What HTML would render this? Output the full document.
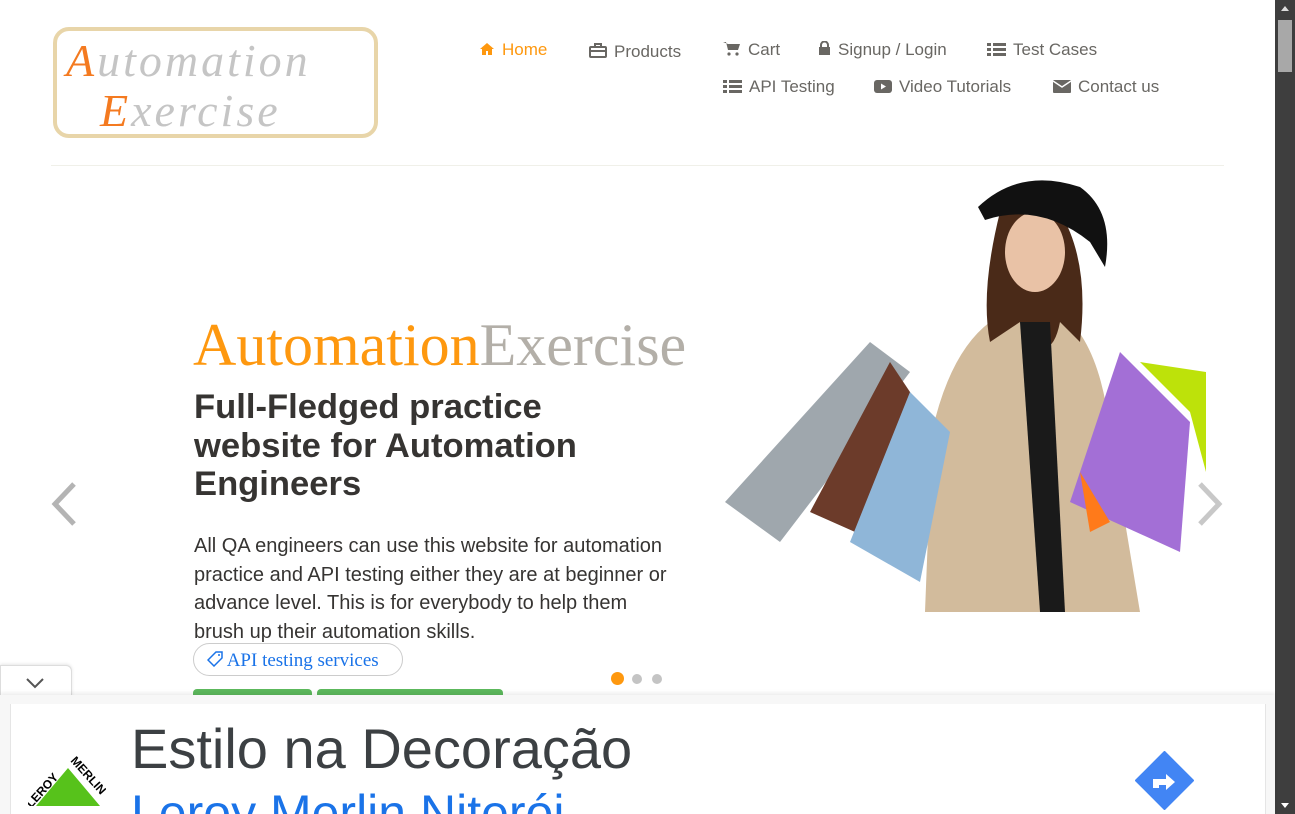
<!DOCTYPE html>
<html style="overflow:hidden;height:814px"><head><meta charset="utf-8"><style>
*{margin:0;padding:0;box-sizing:border-box}
body{width:1295px;height:814px;overflow:hidden;background:#fff;font-family:"Liberation Sans",sans-serif;position:relative}
.sb{position:absolute;right:0;top:0;width:20px;height:814px;background:#3e3e3e}
.thumb{position:absolute;right:3px;top:20px;width:14px;height:52px;background:#a8a8a8}
.nav a{position:absolute;color:#696763;font-size:17px;text-decoration:none;white-space:nowrap}
.nav svg{vertical-align:-1px;margin-right:7px}
.t{position:absolute;white-space:nowrap}
</style></head><body>
<div class="sb"><div class="thumb"></div>
<div style="position:absolute;left:6px;top:6px;border:4px solid transparent;border-bottom:5px solid #ddd;border-top:0"></div>
<div style="position:absolute;left:6px;bottom:6px;border:4px solid transparent;border-top:5px solid #fff;border-bottom:0"></div></div>
<!-- logo -->
<div style="position:absolute;left:53px;top:27px;width:325px;height:111px;border:4px solid #e8d5a9;border-radius:16px;background:#fff"></div>
<div class="t" style="left:66px;top:34px;font:italic 46px 'Liberation Serif',serif;color:#c5c5c5;letter-spacing:3px"><span style="color:#f47a20">A</span>utomation</div>
<div class="t" style="left:100px;top:84px;font:italic 46px 'Liberation Serif',serif;color:#c5c5c5;letter-spacing:3px"><span style="color:#f47a20">E</span>xercise</div>
<div class="nav">
<a style="left:479px;top:40px;color:#FE980F"><svg width="16" height="14" viewBox="0 0 16 14"><path d="M8 1L1 7h2v6h4V9h2v4h4V7h2z" fill="#FE980F"/></svg>Home</a>
<a style="left:589px;top:42px"><svg width="18" height="15" viewBox="0 0 18 15"><rect x="1" y="4" width="16" height="10" rx="1" fill="none" stroke="#696763" stroke-width="2"/><path d="M6 4V1h6v3M1 8h16" stroke="#696763" stroke-width="2" fill="none"/></svg>Products</a>
<a style="left:723px;top:40px"><svg width="18" height="15" viewBox="0 0 18 15"><path d="M0 1h3l2 8h10l2-6H5" fill="#696763"/><circle cx="6" cy="13" r="1.6" fill="#696763"/><circle cx="14" cy="13" r="1.6" fill="#696763"/></svg>Cart</a>
<a style="left:818px;top:40px"><svg width="13" height="15" viewBox="0 0 13 15"><rect x="1" y="6" width="11" height="8" fill="#696763"/><path d="M3 6V4a3.5 3.5 0 017 0v2" stroke="#696763" stroke-width="2" fill="none"/></svg>Signup / Login</a>
<a style="left:987px;top:40px"><svg width="19" height="14" viewBox="0 0 19 14"><path d="M0 1h4v3H0zM6 1h13v3H6zM0 6h4v3H0zM6 6h13v3H6zM0 11h4v3H0zM6 11h13v3H6z" fill="#696763"/></svg>Test Cases</a>
<a style="left:723px;top:77px"><svg width="19" height="14" viewBox="0 0 19 14"><path d="M0 1h4v3H0zM6 1h13v3H6zM0 6h4v3H0zM6 6h13v3H6zM0 11h4v3H0zM6 11h13v3H6z" fill="#696763"/></svg>API Testing</a>
<a style="left:874px;top:77px"><svg width="18" height="14" viewBox="0 0 18 14"><rect x="0" y="1" width="18" height="13" rx="3" fill="#696763"/><path d="M7 4.5v6l5-3z" fill="#fff"/></svg>Video Tutorials</a>
<a style="left:1053px;top:77px"><svg width="18" height="14" viewBox="0 0 18 14"><rect x="0" y="1" width="18" height="13" rx="1" fill="#696763"/><path d="M0 2l9 6 9-6" stroke="#fff" stroke-width="1.5" fill="none"/></svg>Contact us</a>
</div>
<div style="position:absolute;left:51px;top:165px;width:1173px;height:1px;background:#f0f0e9"></div>
<!-- hero -->
<div class="t" style="left:193px;top:311px;font:60px 'Liberation Serif',serif;color:#FE980F">Automation<span style="color:#b3afa8">Exercise</span></div>
<div class="t" style="left:194px;top:388px;font:bold 34.6px 'Liberation Sans';color:#363432;line-height:38.5px">Full-Fledged practice<br>website for Automation<br>Engineers</div>
<div class="t" style="left:194px;top:532px;font:20px 'Liberation Sans';color:#363432;line-height:28.7px">All QA engineers can use this website for automation<br>practice and API testing either they are at beginner or<br>advance level. This is for everybody to help them<br>brush up their automation skills.</div>
<div style="position:absolute;left:193px;top:643px;width:210px;height:33px;border:1px solid #ccc;border-radius:17px"></div>
<div class="t" style="left:207px;top:650px;font:19px 'Liberation Serif',serif;color:#1a73e8"><svg width="16" height="16" viewBox="0 0 16 16" style="vertical-align:-1px"><path d="M9 1h6v6l-8 8-6-6z" fill="none" stroke="#1a73e8" stroke-width="1.5"/><circle cx="12" cy="4" r="1" fill="#1a73e8"/></svg> API testing services</div>
<div style="position:absolute;left:193px;top:689px;width:119px;height:20px;background:#5cb85c;border-radius:4px"></div>
<div style="position:absolute;left:317px;top:689px;width:186px;height:20px;background:#5cb85c;border-radius:4px"></div>
<svg style="position:absolute;left:50px;top:482px" width="28" height="44"><path d="M24 2L5 22l19 20" stroke="#b4b4b4" stroke-width="5" fill="none"/></svg>
<svg style="position:absolute;left:1196px;top:482px" width="28" height="44"><path d="M4 2l19 20L4 42" stroke="#c8c8c8" stroke-width="5" fill="none"/></svg>
<!-- woman approximation -->
<svg style="position:absolute;left:720px;top:172px" width="490" height="440">
<path d="M205 440 L212 260 Q230 180 270 150 L340 140 Q380 170 390 260 L420 440Z" fill="#d2bb9c"/>
<path d="M280 40 Q260 120 270 170 L300 150 Q330 200 340 150 L360 170 Q370 90 340 40Z" fill="#4a2a18"/>
<ellipse cx="315" cy="80" rx="30" ry="40" fill="#e9c2a6"/>
<path d="M258 35 Q300 -5 360 15 Q395 40 385 95 L370 70 Q320 30 265 48Z" fill="#111"/>
<path d="M300 150 L320 440 L345 440 L330 150Z" fill="#1a1a1a"/>
<path d="M5 330 L150 170 L190 200 L60 370Z" fill="#9fa7ad"/>
<path d="M90 340 L170 190 L210 250 L180 380Z" fill="#6c3b2a"/>
<path d="M130 370 L190 220 L230 260 L200 410Z" fill="#8fb6d8"/>
<path d="M350 330 L400 180 L470 250 L460 380Z" fill="#a36fd6"/>
<path d="M420 190 L470 240 L486 300 L486 200Z" fill="#bde20a"/>
<path d="M360 300 L390 350 L370 360Z" fill="#ff7a1a"/>
</svg>
<div style="position:absolute;left:611px;top:672px;width:13px;height:13px;border-radius:50%;background:#FE980F"></div>
<div style="position:absolute;left:632px;top:674px;width:10px;height:10px;border-radius:50%;background:#c4c4c4"></div>
<div style="position:absolute;left:652px;top:674px;width:10px;height:10px;border-radius:50%;background:#c4c4c4"></div>
<!-- ad -->
<div style="position:absolute;left:0;top:665px;width:72px;height:32px;background:#fff;border:1px solid #ddd;border-bottom:0;border-radius:0 6px 0 0;box-shadow:0 -1px 3px rgba(0,0,0,.1)"></div>
<svg style="position:absolute;left:25px;top:676px" width="20" height="14"><path d="M2 3l8 8 8-8" stroke="#555" stroke-width="2" fill="none"/></svg>
<div style="position:absolute;left:0;top:695px;width:1275px;height:119px;background:#f7f7f7;box-shadow:0 -2px 4px rgba(0,0,0,.08)"></div>
<div style="position:absolute;left:10px;top:704px;width:1256px;height:110px;background:#fff;border-left:1px solid #e5e5e5;border-right:1px solid #e5e5e5;overflow:hidden">
<div class="t" style="left:120px;top:12px;font:56px 'Liberation Sans',sans-serif;color:#3c4043">Estilo na Decoração</div>
<div class="t" style="left:120px;top:80px;font:50px 'Liberation Sans',sans-serif;color:#1a73e8">Leroy Merlin Niterói</div>
</div>
<svg style="position:absolute;left:28px;top:756px" width="78" height="50"><path d="M8 50L40 12 72 50Z" fill="#57c21b"/><text x="0" y="45" font-family="Liberation Sans" font-weight="bold" font-size="12" transform="rotate(-48 10 45)">LEROY</text><text x="42" y="5" font-family="Liberation Sans" font-weight="bold" font-size="12" transform="rotate(48 42 5)">MERLIN</text></svg>
<svg style="position:absolute;left:1135px;top:751px" width="59" height="59"><path d="M29.5 1L58 29.5 29.5 58 1 29.5Z" fill="#4285f4" stroke="#4285f4" stroke-width="2" stroke-linejoin="round"/><path d="M18 37V28h13v-5l9 8-9 8v-5h-7v3z" fill="#fff"/></svg>
</body></html>
